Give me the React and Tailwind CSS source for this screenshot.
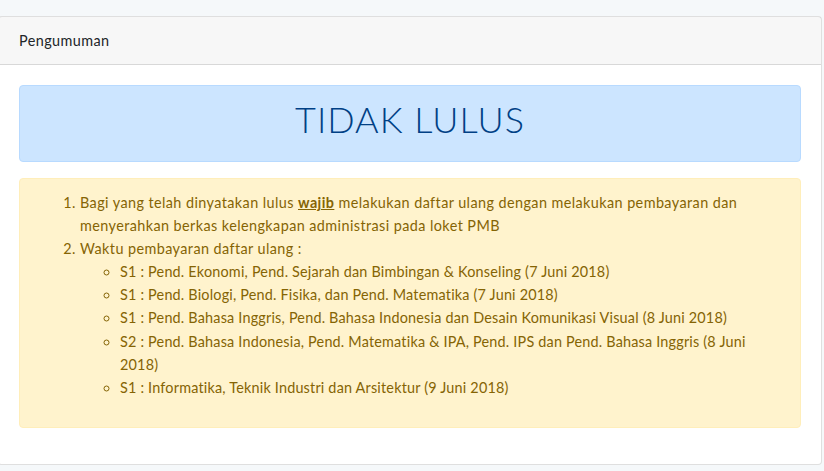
export default function App() {
  const font = { fontFamily: 'Lato, "Noto Sans", sans-serif' };
  return (
    <div className="min-h-screen bg-[#f5f8fa] pt-4 text-[14.4px] leading-[1.6] tracking-[0.42px] text-[#212529]" style={font}>
      <div className="-ml-[2px] w-[824px] rounded border border-black/[.125] bg-white">
        <div className="border-b border-black/[.125] bg-black/[.03] px-5 py-3">Pengumuman</div>
        <div className="p-5">
          <div className="mb-4 rounded border border-[#b8daff] bg-[#cce5ff] px-5 py-3 text-[#004085]">
            <h1 className="mb-2 text-center text-[36px] font-light leading-[1.2] tracking-[1px]">TIDAK LULUS</h1>
          </div>
          <div className="mb-4 rounded border border-[#ffeeba] bg-[#fff3cd] px-5 py-3 text-[#856404]">
            <ol className="mb-4 list-decimal pl-10">
              <li>
                Bagi yang telah dinyatakan lulus <b><u>wajib</u></b> melakukan daftar ulang dengan melakukan pembayaran dan menyerahkan berkas kelengkapan administrasi pada loket PMB
              </li>
              <li>
                Waktu pembayaran daftar ulang :
                <ul className="list-[circle] pl-10 tracking-[0.2px]">
                  <li>S1 : Pend. Ekonomi, Pend. Sejarah dan Bimbingan &amp; Konseling (7 Juni 2018)</li>
                  <li>S1 : Pend. Biologi, Pend. Fisika, dan Pend. Matematika (7 Juni 2018)</li>
                  <li>S1 : Pend. Bahasa Inggris, Pend. Bahasa Indonesia dan Desain Komunikasi Visual (8 Juni 2018)</li>
                  <li>S2 : Pend. Bahasa Indonesia, Pend. Matematika &amp; IPA, Pend. IPS dan Pend. Bahasa Inggris (8 Juni 2018)</li>
                  <li>S1 : Informatika, Teknik Industri dan Arsitektur (9 Juni 2018)</li>
                </ul>
              </li>
            </ol>
          </div>
        </div>
      </div>
    </div>
  );
}
